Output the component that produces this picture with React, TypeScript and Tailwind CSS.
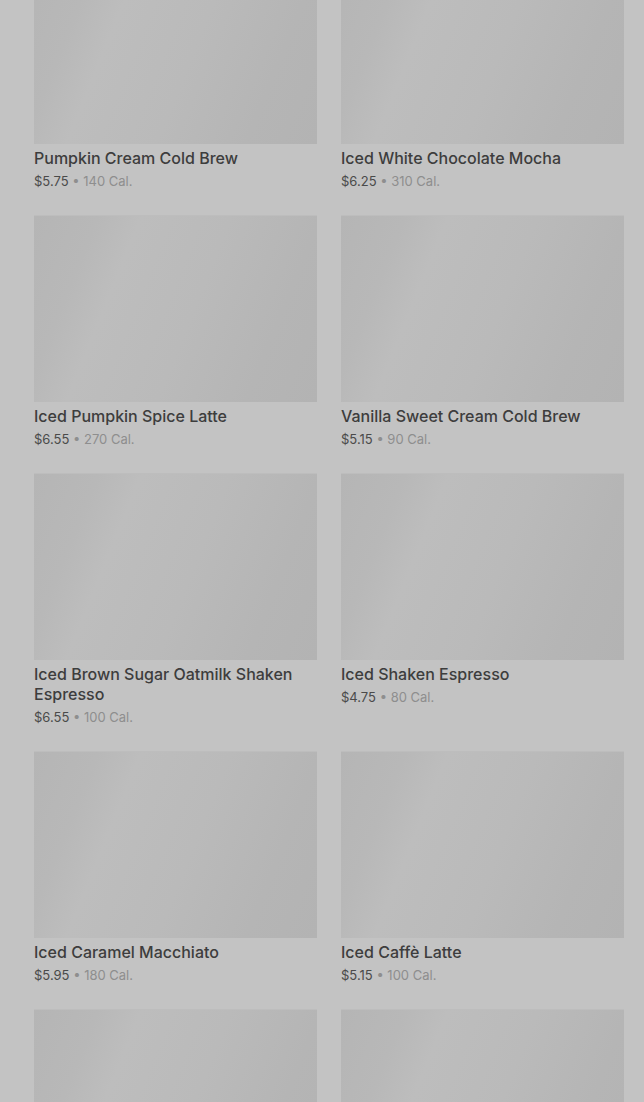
import React from 'react';

interface Drink {
  name: string;
  price: string;
  cal: number;
}

const DRINKS: Drink[] = [
  { name: 'Pumpkin Cream Cold Brew', price: '$5.75', cal: 140 },
  { name: 'Iced White Chocolate Mocha', price: '$6.25', cal: 310 },
  { name: 'Iced Pumpkin Spice Latte', price: '$6.55', cal: 270 },
  { name: 'Vanilla Sweet Cream Cold Brew', price: '$5.15', cal: 90 },
  { name: 'Iced Brown Sugar Oatmilk Shaken Espresso', price: '$6.55', cal: 100 },
  { name: 'Iced Shaken Espresso', price: '$4.75', cal: 80 },
  { name: 'Iced Caramel Macchiato', price: '$5.95', cal: 180 },
  { name: 'Iced Caffè Latte', price: '$5.15', cal: 100 },
];

function ImagePlaceholder() {
  return (
    <div className="h-[187px] w-full border-t border-[#bdbdbd] bg-[linear-gradient(112deg,#b5b5b5_0%,#b8b8b8_18%,#bdbdbd_30%,#bababa_55%,#b5b5b5_80%,#b3b3b3_100%)]" />
  );
}

function DrinkCard({ drink }: { drink: Drink }) {
  return (
    <div className="flex flex-col">
      <ImagePlaceholder />
      <h3 className="mt-1 text-base font-medium leading-5 text-[#3d3d3d]">{drink.name}</h3>
      <p className="mt-[3px] text-[13px] leading-5">
        <span className="text-[#4a4a4a]">{drink.price}</span>
        <span className="text-[#8e8e8e]"> • {drink.cal} Cal.</span>
      </p>
    </div>
  );
}

export default function App() {
  return (
    <div
      className="h-[1102px] overflow-hidden bg-[#c3c3c3]"
      style={{ fontFamily: 'Inter, "Noto Sans", sans-serif' }}
    >
      <div className="-mt-[43px] grid grid-cols-2 gap-x-6 gap-y-6 pl-[34px] pr-5">
        {DRINKS.map((d) => (
          <DrinkCard key={d.name} drink={d} />
        ))}
        {/* next row, still loading */}
        <ImagePlaceholder />
        <ImagePlaceholder />
      </div>
    </div>
  );
}
